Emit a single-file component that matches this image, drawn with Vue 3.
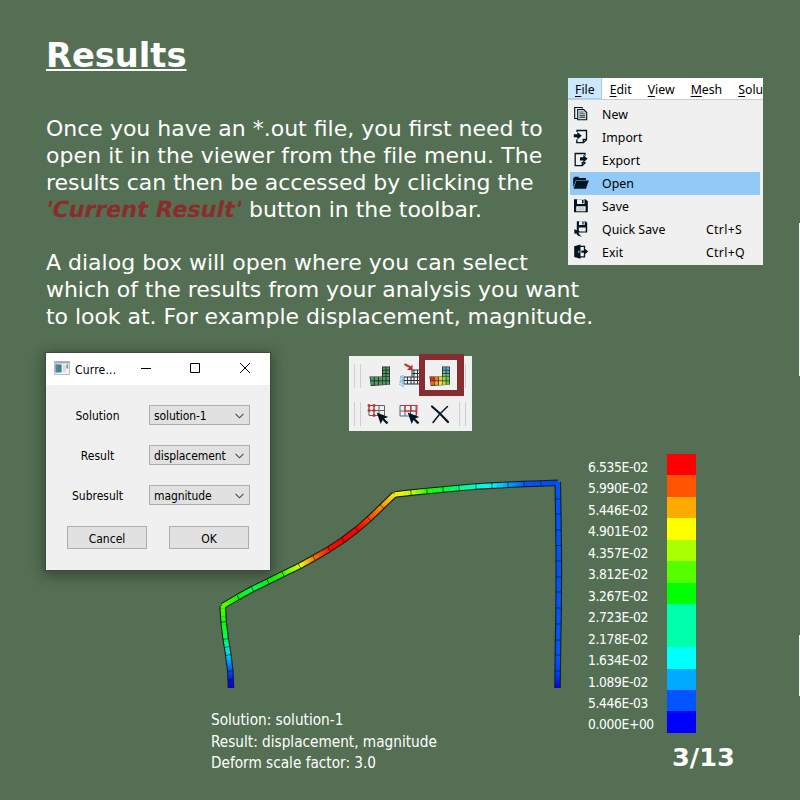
<script setup>
const paragraphs = [
  [
    { text: 'Once you have an *.out file, you first need to' },
    { text: 'open it in the viewer from the file menu. The', cls: 'loose' },
    { text: 'results can then be accessed by clicking the' },
    { em: "'Current Result'", text: ' button in the toolbar.' },
  ],
  [
    { text: 'A dialog box will open where you can select' },
    { text: 'which of the results from your analysis you want', cls: 'tight' },
    { text: 'to look at. For example displacement, magnitude.', cls: 'tight' },
  ],
]
const menus = [['F', 'ile'], ['E', 'dit'], ['V', 'iew'], ['M', 'esh'], ['S', 'olu']]
const items = [
  { name: 'New', icon: 'new' },
  { name: 'Import', icon: 'import' },
  { name: 'Export', icon: 'export' },
  { name: 'Open', icon: 'open' },
  { name: 'Save', icon: 'save' },
  { name: 'Quick Save', icon: 'quick', keys: 'Ctrl+S' },
  { name: 'Exit', icon: 'exit', keys: 'Ctrl+Q' },
]
const fields = [['Solution', 'solution-1'], ['Result', 'displacement'], ['Subresult', 'magnitude']]
const legend = [
  ['6.535E-02', '#ff0000'], ['5.990E-02', '#ff5500'], ['5.446E-02', '#ffaa00'], ['4.901E-02', '#ffff00'],
  ['4.357E-02', '#aaff00'], ['3.812E-02', '#55ff00'], ['3.267E-02', '#00ff00'], ['2.723E-02', '#00ffaa'],
  ['2.178E-02', '#00ffaa'], ['1.634E-02', '#00ffff'], ['1.089E-02', '#00aaff'], ['5.446E-03', '#0055ff'],
  ['0.000E+00', '#0000ff'],
]

// Deformed frame: x, y and RGB colour at each node
const members = [
  [[231, 688, 0, 0, 235], [230.7, 680, 0, 20, 255], [230.3, 671, 0, 90, 255], [228.3, 655, 0, 220, 255], [227, 647, 0, 255, 200],
    [225.7, 639, 0, 255, 80], [223.6, 622, 20, 255, 0], [222.7, 606, 90, 255, 0]],
  [[222.7, 606, 90, 255, 0], [238, 597, 0, 255, 0], [252.5, 589, 0, 255, 90], [268, 581.5, 0, 255, 0], [283, 574, 60, 255, 0],
    [299.5, 566, 240, 255, 0], [314, 558, 255, 110, 0], [329, 549.3, 255, 10, 0], [343, 540, 255, 0, 0], [357, 529.5, 255, 0, 0],
    [369, 519, 255, 70, 0], [382, 506.5, 255, 155, 0], [394.5, 494.5, 255, 240, 0]],
  [[394.5, 494.5, 255, 240, 0], [411, 492.6, 190, 255, 0], [427, 491, 30, 255, 0], [443, 489.5, 0, 255, 50], [459, 488, 0, 255, 140],
    [476, 486.5, 0, 255, 210], [492, 485.6, 0, 245, 255], [508, 484.8, 0, 160, 255], [524, 484, 0, 85, 255],
    [541, 483.5, 0, 80, 255], [558, 482.8, 0, 70, 255]],
  [[557.8, 482, 0, 85, 255], [558, 499, 0, 85, 255], [558.3, 514, 0, 85, 255], [558.5, 530, 0, 85, 255], [558.7, 545.5, 0, 85, 255],
    [558.8, 561, 0, 85, 255], [558.8, 577, 0, 85, 255], [558.7, 592, 0, 85, 255], [558.6, 608, 0, 85, 255],
    [558.4, 624, 0, 85, 255], [558.1, 640, 0, 85, 255], [557.9, 655, 0, 85, 255], [557.7, 671, 0, 65, 255], [557.5, 688, 0, 0, 220]],
]
const outlines = members.map(m => m.map(p => `${p[0]},${p[1]}`).join(' '))
const strips = []
const ticks = []
for (const m of members) {
  for (let i = 0; i < m.length - 1; i++) {
    const a = m[i], b = m[i + 1]
    const at = t => a.map((v, k) => v + (b[k] - v) * t)
    for (let s = 0; s < 6; s++) {
      const p = at(s / 6), q = at(Math.min(1, (s + 1.15) / 6))
      strips.push({ x1: p[0], y1: p[1], x2: q[0], y2: q[1], c: `rgb(${p.slice(2).map(Math.round).join(',')})` })
    }
    const len = Math.hypot(b[0] - a[0], b[1] - a[1])
    const nx = (-(b[1] - a[1]) / len) * 2.6, ny = ((b[0] - a[0]) / len) * 2.6
    if (i) ticks.push({ x1: a[0] - nx, y1: a[1] - ny, x2: a[0] + nx, y2: a[1] + ny })
  }
}

// L-shaped mesh used by the toolbar icons
const mesh = (colors) => {
  const cells = []
  let n = 0
  for (let r = 0; r < 5; r++)
    for (let c = 0; c < 5; c++) {
      if (r < 3 && c < 3) continue
      const x = c < 3 ? 1 + c * 4.2 : 13.4 + (c - 3) * 3.6
      const y = r < 3 ? 0.8 + r * 3.3 : 10.4 + (r - 3) * 4.4
      cells.push({ x, y, w: c < 3 ? 4.2 : 3.6, h: r < 3 ? 3.3 : 4.4, c: colors ? colors[n] : '#5c9468' })
      n++
    }
  return cells
}
const plainMesh = mesh()
const colorMesh = mesh(['#4aa3c9', '#5aa9dc', '#58b6b0', '#4f9fd8', '#7cc64a', '#5ab6a8',
  '#d8302a', '#f07c28', '#f5c33a', '#9ed23e', '#6cc04a', '#ee6a2a', '#f5a32c', '#f3e03c', '#b9da3c', '#6cc04a'])
</script>

<template>
  <main class="slide">
    <h1>Results</h1>

    <section class="copy">
      <p v-for="(p, i) in paragraphs" :key="i">
        <span v-for="(line, j) in p" :key="j" :class="['line', line.cls]"><em v-if="line.em">{{ line.em }}</em>{{ line.text }}</span>
      </p>
    </section>

    <section class="menu">
      <nav class="menubar">
        <span v-for="(m, i) in menus" :key="i" :class="['top', { active: i === 0 }]"><u>{{ m[0] }}</u>{{ m[1] }}</span>
      </nav>
      <ul class="items">
        <li v-for="it in items" :key="it.name" :class="{ selected: it.icon === 'open' }">
          <svg class="glyph" viewBox="0 0 16 16" fill="none" stroke="#001522" stroke-width="1.3">
            <g v-if="it.icon === 'new'">
              <path d="M4.500 12.500H1.700V1.500h7.500v1" stroke-width="1.1" />
              <path d="M4.700 3.500h6l3 3v7.300h-9z" fill="#d5dade" stroke-width="1.1" />
              <path d="M6.500 6h4M6.500 7.800h5.700M6.500 9.600h5.700M6.500 11.400h5.700" stroke="#4b5a66" stroke-width="1.1" />
            </g>
            <g v-else-if="it.icon === 'import'">
              <path d="M4 3V1.500h9.500v9.300L10.500 13.700H3.800V10.500" /><path d="M10.300 13.500v-3h3" />
              <path d="M.8 5.200h3.500V3L8.800 6.700 4.300 10.400V8.200H.8z" fill="#001522" stroke="none" />
            </g>
            <g v-else-if="it.icon === 'export'">
              <path d="M12 3.800V1.500H2.200v12.200h7L12 10.900v-.8" /><path d="M9.300 13.300v-2.600h2.500" />
              <path d="M7 5.200h3.300V3l4.300 3.800-4.300 3.700V8.400H7z" fill="#001522" stroke="none" />
            </g>
            <g v-else-if="it.icon === 'open'" fill="#001522" stroke="none">
              <path d="M.2 12V2.800h1l.6-1h3.600l.8 1.200h6.800V5H3L.8 11z" /><path d="M3.300 5.500h12.500L13 13.700H.6z" />
            </g>
            <g v-else-if="it.icon === 'save'">
              <path d="M1 1.300h11.500l2.300 2V14.300H1z" fill="#001522" stroke="none" />
              <path d="M4 1.300h7.500v4.600H4zM3.200 8.300h9.400v5H3.200z" fill="#eef1f3" stroke="none" />
              <path d="M9 2h1.500v3.200H9z" fill="#001522" stroke="none" /><path d="M4.500 10h6.800M4.500 11.700h6.800" stroke="#9aa5ad" stroke-width=".7" />
            </g>
            <g v-else-if="it.icon === 'quick'">
              <path d="M3.800 .2h8.800L14.200 1.800V11.500H3.800z" fill="#001522" stroke="none" />
              <path d="M6 .2h5.700v3.900H6zM5.800 6.500h6.900v3.900H5.800z" fill="#eef1f3" stroke="none" />
              <path d="M9.400 .8h1.200v2.600H9.400z" fill="#001522" stroke="none" />
              <path d="M1.200 8.300 7 10.300 5.300 11.500Q6 14 9 15.500 4.300 15.500 3.300 12.300L1.500 13z" fill="#001522" stroke="none" />
            </g>
            <g v-else>
              <path d="M6.500 2.300h5v2.500M6.500 12.800h5v-2.500" />
              <path d="M1.200 2.300 7.500.5v14.300L1.200 13z" fill="#001522" stroke="none" />
              <path d="M8.300 6.400h2.600V4l4.300 3.600-4.300 3.600V8.800H8.300z" fill="#001522" stroke="none" />
              <path d="M5.800 6.700v2" stroke="#eee" stroke-width=".9" />
            </g>
          </svg>
          <span>{{ it.name }}</span><kbd v-if="it.keys">{{ it.keys }}</kbd>
        </li>
      </ul>
    </section>

    <svg class="plot" viewBox="200 460 380 240">
      <polyline v-for="(o, i) in outlines" :key="i" :points="o" class="edge" />
      <line v-for="(s, i) in strips" :key="'s' + i" :x1="s.x1" :y1="s.y1" :x2="s.x2" :y2="s.y2" :stroke="s.c" stroke-width="4.400" />
      <line v-for="(t, i) in ticks" :key="'t' + i" :x1="t.x1" :y1="t.y1" :x2="t.x2" :y2="t.y2" class="tick" />
    </svg>

    <section class="dialog">
      <header>
        <svg class="app" viewBox="0 0 16 14">
          <rect x=".4" y=".6" width="15.200" height="12.800" fill="#eef1f4" stroke="#aab0b8" stroke-width=".8" />
          <rect x=".4" y=".4" width="15.200" height="2" fill="#a4abb5" />
          <rect x="1.600" y="3.400" width="6" height="8" fill="#3f8583" /><rect x="1.600" y="3.400" width="2" height="8" fill="#5a86a8" />
          <rect x="9" y="4" width="2.500" height="7" fill="#d6dade" /><rect x="12.400" y="3.500" width="1.800" height="4" fill="#5fa58c" />
        </svg>
        <b>Curre...</b>
        <svg class="winbtns" viewBox="0 0 110 12" fill="none" stroke="#000">
          <path d="M1 6.500h10M50.500 1.500h9v9h-9zM100 1l10 10M110 1l-10 10" />
        </svg>
      </header>
      <div class="form">
        <label v-for="f in fields" :key="f[0]">
          <span>{{ f[0] }}</span>
          <i class="combo">{{ f[1] }}<svg viewBox="0 0 9 6"><path d="M.5 .8 4.500 4.800 8.500 .8" fill="none" stroke="#4a4a4a" stroke-width="1.100" /></svg></i>
        </label>
      </div>
      <footer><button>Cancel</button><button>OK</button></footer>
    </section>

    <section class="toolbar">
      <div class="tools">
        <i class="grip"></i>
        <svg class="tool" viewBox="0 0 22 21">
          <path d="M.5 10.500H13V.5h8v18.200L1.800 20z" fill="#13331f" />
          <rect v-for="(c, i) in plainMesh" :key="i" :x="c.x + .5" :y="c.y + .5" :width="c.w - .9" :height="c.h - .9" :fill="c.c" />
        </svg>
        <svg class="tool load" viewBox="0 0 22 21">
          <path d="M5 11h8V4h9v14H5zM5 14.500h17M13 11h9M13 7.500h9M8.500 11v7M12 11v7M15 4v14M18.500 4v14" fill="none" stroke="#2a333b" stroke-width="1" />
          <path d="M4 9 1 12l3 2-3.500 2L4 18M4 9v11M1 10l5 3M1 14l5 3M0 18l5 3" fill="none" stroke="#7fbbe0" stroke-width="1" />
          <path d="M5.500-1.800 12 1.700" stroke="#c0292b" stroke-width="2" /><path d="M13.500-1.500v5.500H8z" fill="#c0292b" />
        </svg>
        <svg class="tool" viewBox="0 0 22 21">
          <path d="M.5 10.500H13V.5h8v18.200L1.800 20z" fill="#2b2a22" />
          <rect v-for="(c, i) in colorMesh" :key="i" :x="c.x + .4" :y="c.y + .4" :width="c.w - .7" :height="c.h - .7" :fill="c.c" />
        </svg>
        <i class="rule"></i>
      </div>
      <div class="tools">
        <i class="grip"></i>
        <svg class="tool" viewBox="0 0 22 21">
          <path d="M1 1.500h15.500v10H1zM1 6.500h15.500M6 1.500v10M11 1.500v10" fill="none" stroke="#5b646c" stroke-width="1" />
          <path d="M1 1.500h5v10M1 1.500v5h5" fill="none" stroke="#c63a3a" stroke-width=".8" />
          <path d="M-.3.200h2.600v2.600H-.3zM4.700.200h2.600v2.600H4.700zM-.3 5.200h2.600v2.600H-.3zM4.700 5.200h2.600v2.600H4.700zM4.700 10.200h2.600v2.600H4.700z" fill="#c9282b" />
          <path d="M8.700 8.400 20.300 13l-4.200 1.600 4.200 4-1.600 1.600-4.200-4.300-1.800 4z" fill="#001522" />
        </svg>
        <svg class="tool" viewBox="0 0 22 21">
          <path d="M1 1.500h16v10.500H1zM1 7h16M6 1.500V12M11.500 1.500V12" fill="none" stroke="#5b646c" stroke-width="1" />
          <path d="M6 1.500h12L17.500 11.500M6 1.500V7h12M12 1.500V7" fill="none" stroke="#d0282b" stroke-width="1.200" />
          <path d="M8.700 8.400 20.300 13l-4.200 1.600 4.200 4-1.600 1.600-4.200-4.300-1.800 4z" fill="#001522" />
        </svg>
        <svg class="tool" viewBox="0 0 22 21">
          <path d="M2 2.500Q10 9 18 18" fill="none" stroke="#001522" stroke-width="2.200" stroke-linecap="round" />
          <path d="M17.500 2.500Q9 10 3 18.500" fill="none" stroke="#001522" stroke-width="1.500" stroke-linecap="round" />
        </svg>
        <i class="grip end"></i>
      </div>
      <span class="frame"></span>
    </section>

    <section class="legend">
      <div v-for="l in legend" :key="l[0]"><span>{{ l[0] }}</span><i :style="{ background: l[1] }"></i></div>
    </section>

    <p class="caption">Solution: solution-1<br>Result: displacement, magnitude<br>Deform scale factor: 3.0</p>
    <p class="page">3/13</p>
    <i class="sliver upper"></i>
    <i class="sliver lower"></i>
  </main>
</template>

<style>
body { margin: 0; background: #546f53; }
</style>

<style scoped>
.slide {
  display: grid; width: 800px; height: 800px; overflow: hidden; box-sizing: border-box;
  grid-template-columns: 46px 154px 11px 138px 219px 20px 79px 132px 1px;
  grid-template-rows: 36px 42px 38px 107px 129px 4px 98px 6px 175px 61px 14px 90px;
  background: #546f53; color: #fff; font-family: "DejaVu Sans", sans-serif;
}
h1, p, ul { margin: 0; padding: 0; font-weight: normal; }
h1 {
  grid-area: 2 / 2 / 3 / 6; font-size: 33.700px; line-height: 40px; font-weight: bold;
  text-decoration: underline; text-decoration-thickness: 2px; text-underline-offset: 2px; text-decoration-skip-ink: none;
}
.copy { grid-area: 4 / 2 / 6 / 8; font-size: 22px; line-height: 26.850px; white-space: nowrap; align-self: start; }
.copy p + p { margin-top: 26.850px; }
.line { display: block; white-space: pre; }
.line.loose { letter-spacing: .060px; }
.line.tight { letter-spacing: -.045px; }
.copy em { display: inline-block; color: #8b2c2c; font-style: normal; font-weight: bold; font-size: 22.200px; line-height: 20px; transform: skewX(-12deg); }

.menu {
  grid-area: 3 / 6 / 6 / 9; width: 195px; height: 187px; overflow: hidden; align-self: start;
  background: #f0f0f0; color: #000; font: 12.300px "Noto Sans", sans-serif;
}
.menubar { display: flex; height: 21px; background: #fff; border-bottom: 1px solid #ccc; white-space: nowrap; }
.top { padding: 0 7.500px; line-height: 23px; margin-right: 1px; }
.top.active { background: #cce8ff; border: 1px solid #99d1ff; border-top: 0; border-left: 0; padding: 0 6.500px 0 7px; margin-right: 0; height: 20px; }
.top u { text-underline-offset: 1.500px; text-decoration-skip-ink: none; }
.items { list-style: none; padding: 3px 3px 0 2px; }
.items li { display: grid; grid-template-columns: 32px 104px auto; height: 23px; line-height: 23px; align-items: center; letter-spacing: .050px; }
.items li.selected { background: #91c9f7; }
.glyph { width: 16px; height: 16px; margin: 0 0 1px 3px; }
.items kbd { font: inherit; letter-spacing: .300px; }

.plot { grid-area: 1 / 3 / 13 / 7; width: 380px; height: 240px; margin-top: 460px; }
.edge { fill: none; stroke: #0b120b; stroke-width: 6.600; stroke-linejoin: round; stroke-opacity: .85; }
.tick { stroke: #000; stroke-width: 1; stroke-opacity: .5; }

.dialog {
  grid-area: 6 / 2 / 11 / 5; align-self: start; width: 224px; height: 217px; margin-left: -1px; border: 1px solid #3d4a3d;
  background: #f0f0f0; color: #000; box-shadow: 0 3px 12px 2px rgba(0, 0, 0, .34);
  font: 12px "DejaVu Sans Condensed", "DejaVu Sans", sans-serif;
}
.dialog header { display: flex; align-items: center; height: 32px; background: #fff; }
.app { width: 16px; height: 14px; margin: 0 5px 2px 8px; }
.dialog b { font-weight: normal; width: 65px; margin-top: 2px; letter-spacing: .200px; }
.winbtns { width: 110px; height: 12px; margin-bottom: 3px; }
.form { display: grid; gap: 20px; padding: 20px 20px 0 0; }
.form label { display: grid; grid-template-columns: 103px 101px; height: 20px; align-items: center; }
.form label span { text-align: center; padding-top: 1px; }
.combo {
  display: flex; justify-content: space-between; align-items: center; box-sizing: border-box; height: 20px;
  padding: 1px 5px 0 4px; font-style: normal; background: #e1e1e1; border: 1px solid #adadad; letter-spacing: -.100px;
}
.combo svg { width: 9px; height: 6px; }
.dialog footer { display: flex; gap: 22px; padding: 21px 0 0 21px; }
.dialog button { width: 80px; height: 23px; padding: 2px 0 0; font: inherit; color: #000; background: #e1e1e1; border: 1px solid #adadad; border-radius: 0; }

.toolbar {
  grid-area: 7 / 5 / 9 / 6; position: relative; align-self: start; width: 123px; height: 75px;
  background: #f0f0f0; box-sizing: border-box; padding-top: 1px;
}
.tools { display: flex; align-items: center; height: 38px; padding-left: 5px; }
.tools + .tools { height: 37px; }
.grip { width: 5px; height: 24px; border: solid #cfcfcf; border-width: 0 1px; margin-right: 8px; }
.tool { width: 22px; height: 21px; margin-right: 8px; overflow: visible; }
.tools + .tools .grip { margin-right: 7px; }
.tools + .tools .tool { margin: 2px 9px 0 0; }
.tools + .tools .grip.end { margin: 0 0 0 -2px; }
.rule { width: 1px; height: 24px; margin-left: 6px; background: #cfcfcf; }
.frame { position: absolute; left: 70px; top: -2px; width: 32px; height: 30px; border: 6px solid #852d2f; border-right-width: 7px; }

.legend {
  grid-area: 8 / 7 / 12 / 9; display: grid; grid-template-rows: repeat(13, 21.460px); align-self: start;
  width: 108px; margin-left: 0; grid-column: 7 / 9; justify-self: start;
  transform: none; font: 13.700px "DejaVu Sans Condensed", "DejaVu Sans", sans-serif;
}
.legend { grid-column: 7 / 9; }
.legend div { display: grid; grid-template-columns: 79px 29px; }
.legend span { line-height: 26px; height: 21px; letter-spacing: -.350px; white-space: nowrap; }

.caption {
  grid-area: 12 / 4 / 13 / 7; font: 15.200px "DejaVu Sans Condensed", "DejaVu Sans", sans-serif; line-height: 21.500px; white-space: nowrap;
}
.page { grid-area: 12 / 8 / 13 / 9; font-size: 25.600px; font-weight: bold; line-height: 30px; margin: 32px 0 0 5px; }
.sliver { grid-column: 9; background: #f4f4f4; }
.sliver.upper { grid-row: 5 / 9; height: 153px; }
.sliver.lower { grid-row: 10 / 11; }
</style>
